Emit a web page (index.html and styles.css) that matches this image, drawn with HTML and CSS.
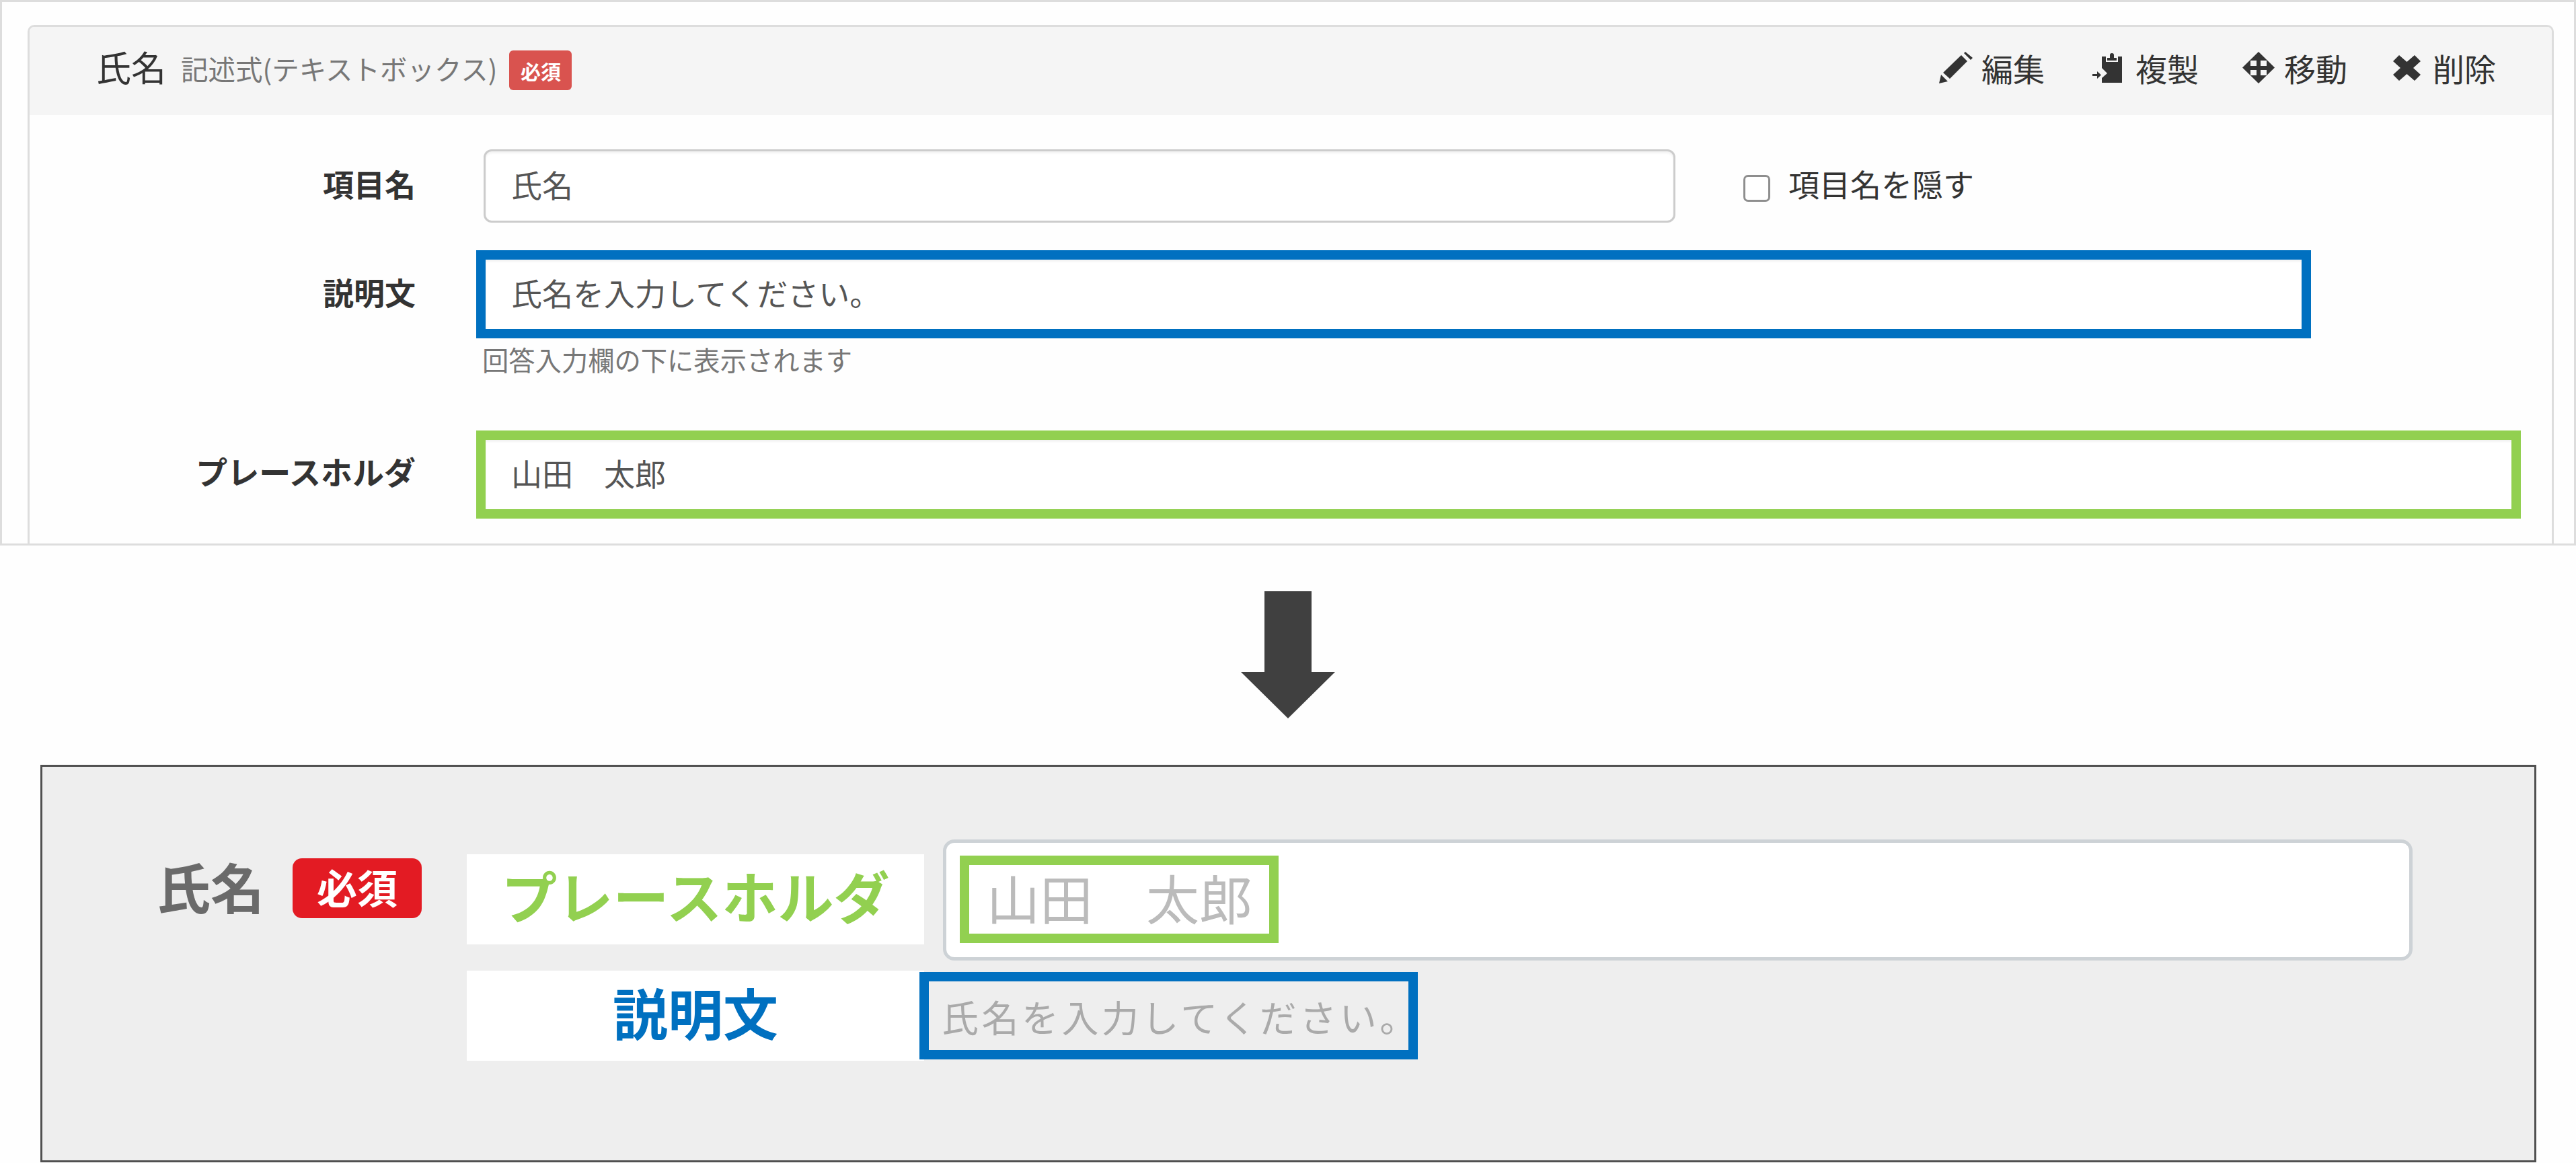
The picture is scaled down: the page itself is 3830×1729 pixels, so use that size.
FILE: index.html
```html
<!DOCTYPE html>
<html lang="ja">
<head>
<meta charset="utf-8">
<title>氏名</title>
<link rel="stylesheet" href="styles.css">
</head>
<body>
<section class="sheet">
  <div class="card">
    <header class="card-head">
      <div class="title-group">
        <span class="title">氏名</span>
        <span class="subtitle">記述式(テキストボックス)</span>
        <span class="req">必須</span>
      </div>
      <div class="actions">
        <a class="action">
          <svg class="icon icon-edit" width="50" height="47" viewBox="0 0 50 47"><path d="M0 47L3 34L13 44ZM6 31L33 5L42 14L16 40ZM37 2L39 0L50 9L47 12Z"/></svg>
          <span>編集</span>
        </a>
        <a class="action action-copy">
          <svg class="icon icon-copy" width="45" height="44" viewBox="0 0 45 44"><path d="M15 5H21V13H39V5H45V44H15V37L23 30L15 22ZM23 11V7H27V3A3 3 0 0 1 33 3V7H37V11ZM1 31H8V27L14 32.5L8 38V34H1Z"/></svg>
          <span>複製</span>
        </a>
        <a class="action action-move">
          <svg class="icon icon-move" width="48" height="47" viewBox="0 0 48 47"><path fill-rule="evenodd" d="M24 0L48 23.5L24 47L0 23.5ZM12 13V21H21V13ZM27 13V21H36V13ZM12 27V35H21V27ZM27 27V35H36V27Z"/></svg>
          <span>移動</span>
        </a>
        <a class="action action-del">
          <svg class="icon icon-del" width="41" height="38" viewBox="0 0 41 38"><path d="M9 0L20.500 10L32 0L41 9L30 19L41 29L32 38L20.500 28L9 38L0 29L11 19L0 9Z"/></svg>
          <span>削除</span>
        </a>
      </div>
    </header>
    <div class="card-body">
      <div class="row row-name">
        <div class="label">項目名</div>
        <div class="control control-plain">氏名</div>
        <label class="hide-opt"><span class="check"></span><span>項目名を隠す</span></label>
      </div>
      <div class="row row-desc">
        <div class="label">説明文</div>
        <div class="field-stack">
          <div class="control control-blue">氏名を入力してください。</div>
          <p class="help">回答入力欄の下に表示されます</p>
        </div>
      </div>
      <div class="row row-ph">
        <div class="label label-ph">プレースホルダ</div>
        <div class="control control-green">山田　太郎</div>
      </div>
    </div>
  </div>
</section>

<svg class="arrow" width="140" height="189" viewBox="0 0 140 189"><path d="M35 0H105V120H140L70 189L0 120H35Z"/></svg>

<section class="preview">
  <div class="preview-head">
    <span class="preview-name">氏名</span>
    <span class="preview-req">必須</span>
  </div>
  <div class="preview-rows">
    <div class="preview-row-a">
      <div class="tag tag-green">プレースホルダ</div>
      <div class="preview-input">
        <div class="mark-green">山田　太郎</div>
      </div>
    </div>
    <div class="preview-row-b">
      <div class="tag tag-blue">説明文</div>
      <div class="mark-blue">氏名を入力してください。</div>
    </div>
  </div>
</section>
</body>
</html>
```
FILE: styles.css
```css
* { box-sizing: border-box; }
html, body { margin: 0; padding: 0; }
body {
  width: 3830px;
  height: 1729px;
  overflow: hidden;
  background: #fefefe;
  color: #333;
  font-family: "Noto Sans CJK JP", "Noto Sans", sans-serif;
}

/* upper screenshot */
.sheet {
  height: 811px;
  width: 3830px;
  border: 3px solid #ddd;
  padding: 34px 30px 0 38px;
}
.card {
  height: 100%;
  border: 3px solid #ddd;
  border-bottom: 0;
  border-radius: 10px 10px 0 0;
}
.card-head {
  height: 131px;
  background: #f5f5f5;
  border-radius: 7px 7px 0 0;
  padding: 0 83px 0 99px;
  display: flex;
  align-items: center;
  justify-content: space-between;
}
.title-group { display: flex; align-items: center; }
.title { font-size: 52px; line-height: 60px; margin-right: 22px; color: #333; margin-top: -14px; }
.subtitle { font-size: 40.500px; line-height: 60px; color: #777; margin-right: 18px; margin-top: -8px; }
.req {
  width: 93px;
  height: 59px;
  margin-top: -2px;
  background: #d9534f;
  color: #fff;
  border-radius: 6px;
  font-size: 30px;
  font-weight: 700;
  display: flex;
  align-items: center;
  justify-content: center;
}
.actions { display: flex; align-items: center; margin-top: -10px; }
.action { display: flex; align-items: center; font-size: 47px; line-height: 60px; color: #333; }
.icon { fill: #333; display: block; flex: none; }
.icon-edit { margin-right: 13px; }
.icon-copy { margin-right: 20px; }
.icon-move { margin-right: 14px; }
.icon-del { margin-right: 18px; }
.action-copy { margin-left: 70px; }
.action-move { margin-left: 65px; }
.action-del { margin-left: 68px; }

.card-body { padding-top: 51px; display: flex; flex-direction: column; }
.row { display: flex; align-items: flex-start; }
.row-desc { margin-top: 41px; }
.row-ph { margin-top: 81px; }
.label {
  width: 574px;
  flex: none;
  display: flex;
  align-items: center;
  justify-content: flex-end;
  font-size: 46px;
  font-weight: 700;
  color: #333;
  padding-bottom: 10px;
}
.row-name .label { height: 109px; }
.row-desc .label { height: 131px; }
.row-ph .label { height: 131px; padding-bottom: 13px; font-size: 47px; }
.control {
  display: flex;
  align-items: center;
  padding-left: 38px;
  padding-bottom: 8px;
  font-size: 46px;
  color: #555;
  background: #fff;
  box-shadow: inset 0 3px 3px rgba(0, 0, 0, .05);
}
.control-plain {
  width: 1772px;
  height: 109px;
  margin-left: 101px;
  border: 3px solid #ccc;
  border-radius: 12px;
}
.field-stack { margin-left: 90px; }
.control-blue {
  width: 2728px;
  height: 131px;
  border: 14px solid #0070c0;
}
.control-green {
  width: 3040px;
  height: 131px;
  margin-left: 90px;
  border: 14px solid #92d050;
}
.help { margin: 6px 0 0 9px; font-size: 39.300px; line-height: 50px; color: #777; }
.hide-opt {
  display: flex;
  align-items: center;
  height: 109px;
  margin-left: 101px;
  font-size: 46px;
  color: #333;
}
.check {
  width: 40px;
  height: 40px;
  margin-right: 27px;
  margin-top: 6px;
  border: 3px solid #8e8e8e;
  border-radius: 7px;
  background: #fff;
}
.hide-opt span:last-child { margin-top: -10px; }

/* arrow */
.arrow { display: block; fill: #404040; margin: 68px 0 69px 1845px; }

/* lower preview */
.preview {
  width: 3711px;
  height: 591px;
  margin-left: 60px;
  border: 3px solid #505050;
  background: #eee;
  padding: 108px 0 0 170px;
  display: flex;
  align-items: flex-start;
}
.preview-head { display: flex; align-items: center; margin-top: 28px; width: 461px; flex: none; }
.preview-name { font-size: 80px; line-height: 89px; font-weight: 700; color: #6a6a6a; margin-right: 42px; margin-top: -8px; }
.preview-req {
  width: 192px;
  height: 89px;
  padding-bottom: 6px;
  background: #e31b23;
  border-radius: 14px;
  color: #fff;
  font-size: 60px;
  font-weight: 700;
  display: flex;
  align-items: center;
  justify-content: center;
}
.preview-rows { display: flex; flex-direction: column; }
.preview-row-a { display: flex; align-items: flex-start; }
.tag {
  width: 680px;
  height: 134px;
  flex: none;
  background: #fff;
  display: flex;
  align-items: center;
  justify-content: center;
  font-weight: 700;
  padding-bottom: 14px;
}
.tag-green { font-size: 83px; color: #92d050; margin-top: 22px; }
.tag-blue { font-size: 82px; color: #0070c0; }
.preview-input {
  width: 2185px;
  height: 180px;
  margin-left: 28px;
  padding: 19px 0 0 20px;
  background: #fff;
  border: 5px solid #cdd2d6;
  border-radius: 17px;
}
.mark-green {
  width: 474px;
  height: 130px;
  border: 14px solid #92d050;
  padding-left: 26px;
  padding-bottom: 8px;
  display: flex;
  align-items: center;
  font-size: 79px;
  color: #bbb;
  white-space: nowrap;
}
.preview-row-b { display: flex; align-items: flex-start; margin-top: 15px; }
.mark-blue {
  width: 741px;
  height: 130px;
  margin: 2px 0 0 -7px;
  flex: none;
  border: 14px solid #0070c0;
  padding-left: 19px;
  display: flex;
  align-items: center;
  font-size: 55px;
  letter-spacing: 4.500px;
  color: #aaa;
  white-space: nowrap;
}
```
